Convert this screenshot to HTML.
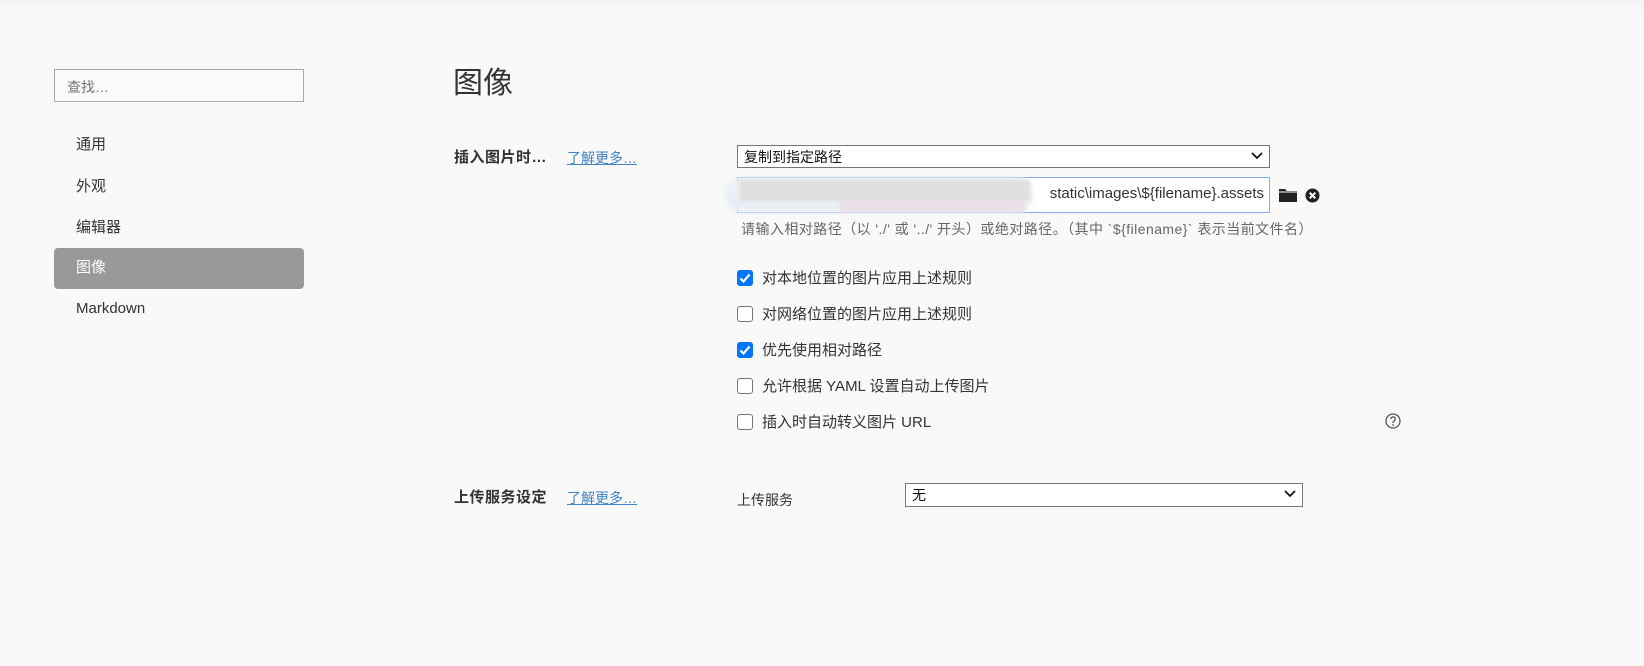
<!DOCTYPE html>
<html><head><meta charset="utf-8"><style>
*{box-sizing:border-box;margin:0;padding:0}
html,body{width:1644px;height:666px;overflow:hidden}
body{background:#f9f9f9;font-family:"Liberation Sans","Noto Sans CJK SC",sans-serif;color:#333;position:relative}
.top{position:absolute;left:0;top:0;width:1644px;height:14px;background:linear-gradient(#f3f3f3,#f9f9f9)}
.a{position:absolute;white-space:nowrap}
.search{left:54px;top:69px;width:250px;height:33px;border:1px solid #a9a9a9;background:#fafafa;font-size:14px;color:#777;padding:7px 12px}
.nav{left:76px;font-size:15px;color:#333;line-height:20px}
.active{left:54px;top:248px;width:250px;height:41px;background:#999;border-radius:4px}
.h1{left:453px;top:66px;font-size:30px;color:#333;line-height:36px}
.lab{left:454px;font-size:15px;font-weight:bold;color:#333;line-height:20px;letter-spacing:.5px}
.link{left:567px;font-size:14px;color:#4183c4;text-decoration:underline;line-height:18px}
.sel{border:1px solid #767676;background:#fff;font-size:14px;color:#111;padding:2px 6px;line-height:18px}
.chev{position:absolute;right:6px;top:5px}
.cb{left:737px;width:16px;height:16px;border-radius:3px}
.on{background:#0075ff}
.off{border:1px solid #767676;background:#fff}
.ct{left:762px;font-size:15px;color:#333;line-height:20px}
</style></head><body>
<div class="top"></div>
<div class="a search">查找…</div>
<div class="a nav" style="top:135px">通用</div>
<div class="a nav" style="top:177px">外观</div>
<div class="a nav" style="top:218px">编辑器</div>
<div class="a active"></div>
<div class="a nav" style="top:258px;color:#fff">图像</div>
<div class="a nav" style="top:299px">Markdown</div>

<div class="a h1">图像</div>
<div class="a lab" style="top:148px">插入图片时…</div>
<div class="a link" style="top:149px">了解更多…</div>

<div class="a sel" style="left:737px;top:145px;width:533px;height:23px">复制到指定路径
<svg class="chev" width="12" height="10" viewBox="0 0 12 10"><path d="M1 2l5 5 5-5" fill="none" stroke="#111" stroke-width="1.8"/></svg></div>

<div class="a" style="left:737px;top:177px;width:533px;height:36px;border:1px solid #7fb0ee;background:#fff;font-size:15px;color:#333;text-align:right;padding:7px 5px 0 0">static\images\${filename}.assets</div>
<div class="a" style="left:725px;top:177px;width:308px;height:36px;border-radius:18px;background:#eaeef5;filter:blur(2px)"></div>
<div class="a" style="left:740px;top:180px;width:290px;height:21px;background:#e0e0e0;filter:blur(1.5px)"></div>
<div class="a" style="left:840px;top:201px;width:185px;height:11px;background:#eadfe5;filter:blur(1.5px)"></div>

<svg class="a" style="left:1279px;top:187px" width="18" height="15" viewBox="0 0 18 15"><path d="M0 2h6l2 2h10v11H0z" fill="#222"/><path d="M0 5h18" stroke="#fff" stroke-width="1"/></svg>
<svg class="a" style="left:1305px;top:188px" width="15" height="15" viewBox="0 0 15 15"><circle cx="7.5" cy="7.5" r="7" fill="#222"/><path d="M4.7 4.7l5.6 5.6M10.3 4.7l-5.6 5.6" stroke="#fff" stroke-width="2"/></svg>

<div class="a" style="left:741px;top:220px;font-size:14px;letter-spacing:.45px;color:#666;line-height:18px">请输入相对路径（以 './' 或 '../' 开头）或绝对路径。（其中 `${filename}` 表示当前文件名）</div>

<div class="a cb on" style="top:270px"><svg width="16" height="16" viewBox="0 0 16 16"><path d="M3.5 8.5l3 3 6-7" fill="none" stroke="#fff" stroke-width="2.2"/></svg></div>
<div class="a ct" style="top:269px">对本地位置的图片应用上述规则</div>
<div class="a cb off" style="top:306px"></div>
<div class="a ct" style="top:305px">对网络位置的图片应用上述规则</div>
<div class="a cb on" style="top:342px"><svg width="16" height="16" viewBox="0 0 16 16"><path d="M3.5 8.5l3 3 6-7" fill="none" stroke="#fff" stroke-width="2.2"/></svg></div>
<div class="a ct" style="top:341px">优先使用相对路径</div>
<div class="a cb off" style="top:378px"></div>
<div class="a ct" style="top:377px">允许根据 YAML 设置自动上传图片</div>
<div class="a cb off" style="top:414px"></div>
<div class="a ct" style="top:413px">插入时自动转义图片 URL</div>

<svg class="a" style="left:1385px;top:413px" width="16" height="16" viewBox="0 0 16 16"><circle cx="8" cy="8" r="7" fill="none" stroke="#555" stroke-width="1.3"/><path d="M5.8 6.2a2.2 2.2 0 1 1 3 2c-.6.3-.8.7-.8 1.4v.4" fill="none" stroke="#555" stroke-width="1.3"/><circle cx="8" cy="12" r=".9" fill="#555"/></svg>

<div class="a lab" style="top:488px">上传服务设定</div>
<div class="a link" style="top:489px">了解更多…</div>
<div class="a" style="left:737px;top:490px;font-size:14px;color:#333;line-height:20px">上传服务</div>
<div class="a sel" style="left:905px;top:483px;width:398px;height:24px">无
<svg class="chev" width="12" height="10" viewBox="0 0 12 10"><path d="M1 2l5 5 5-5" fill="none" stroke="#111" stroke-width="1.8"/></svg></div>
</body></html>
